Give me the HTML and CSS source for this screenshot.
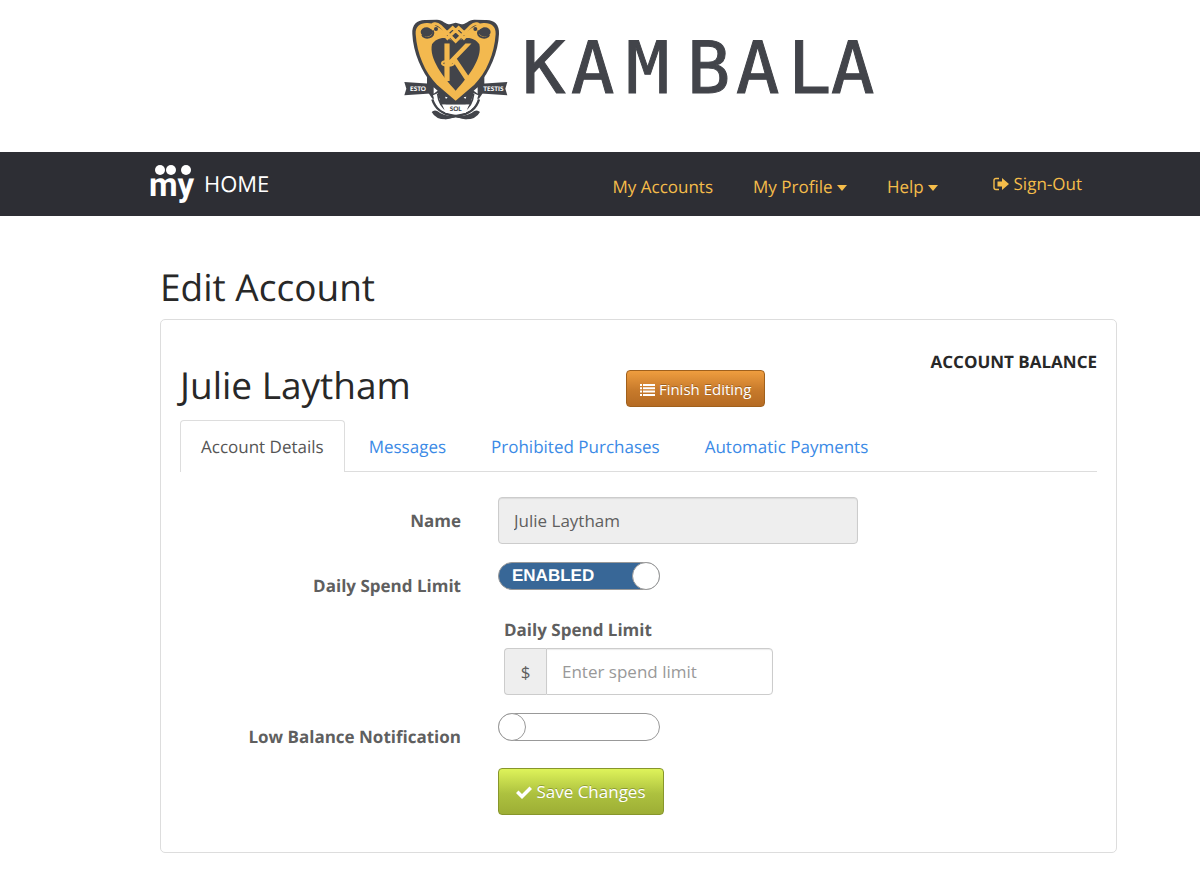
FILE: index.html
```
<!DOCTYPE html>
<html lang="en">
<head>
    <meta charset="UTF-8">
    <meta name="viewport" content="width=device-width, initial-scale=1.0">
    <title>Edit Account - Kambala</title>
    <link rel="stylesheet" href="styles.css">
</head>
<body>
    <header class="masthead">
        <svg class="logo" viewBox="0 0 486 120" role="img" aria-label="Kambala">
            <!-- crest -->
            <g transform="scale(0.3333)">
                <path d="M112 268 Q125 310 176 317 Q195 321 215 324 M252 268 Q240 310 188 317 Q170 321 150 324" fill="none" stroke="#42444a" stroke-width="7"/>
                <path d="M110 306 Q118 298 128 304 Q143 318 176 318 L188 318 Q222 318 237 304 Q247 298 255 306 Q243 329 210 328 L182 322 L155 328 Q122 329 110 306Z" fill="#42444a"/>
                <path d="M28 216 L118 222 L118 250 L28 256 L34 236Z M337 216 L247 222 L247 250 L337 256 L331 236Z" fill="#42444a"/>
                <path d="M96 180 L268 180 L268 242 L252 266 L112 266 L96 242Z" fill="#42444a"/>
                <path d="M135 250 H230 V284 H135Z" fill="#42444a"/>
                <path d="M116 232 L128 242 L116 251Z M248 232 L236 242 L248 251Z" fill="#fff"/>
                <path d="M114 256 L128 250 Q134 268 136 284 L152 284 L152 307 Q124 300 114 256Z M250 256 L236 250 Q230 268 228 284 L212 284 L212 307 Q240 300 250 256Z" fill="#fff"/>
                <path d="M128 252 Q132 288 158 304 M236 252 Q232 288 206 304" fill="none" stroke="#42444a" stroke-width="5"/>
                <path d="M142 284 H222 L212 309 H152Z" fill="#fff"/>
                <path d="M150 260 l8 2 -5 5z M214 260 l-8 2 5 5z" fill="#fff"/>
                <path d="M52 72 C50 42 68 28 94 30 L126 29 C144 30 151 43 165 43 L182 38 L199 43 C213 43 220 30 238 29 L270 30 C296 28 314 42 312 72 C310 126 284 188 250 224 L182 280 L114 224 C80 188 54 126 52 72Z" fill="#42444a"/>
                <path d="M62 72 C61 48 76 38 98 39 C114 39 122 49 134 54 C152 66 166 78 182 91 C198 78 212 66 230 54 C242 49 250 39 266 39 C288 38 303 48 302 72 C298 132 274 188 238 224 L182 272 L126 224 C90 188 66 132 62 72Z" fill="#f3b94f"/>
                <path d="M182 101 C161 76 125 80 111 103 C101 146 146 203 182 242 C218 203 263 146 253 103 C239 80 203 76 182 101Z" fill="#42444a"/>
                <ellipse cx="95" cy="66" rx="18" ry="14" fill="#42444a"/>
                <ellipse cx="269" cy="66" rx="18" ry="14" fill="#42444a"/>
                <path d="M82 74 C86 91 124 83 113 61 M282 74 C278 91 240 83 251 61" fill="none" stroke="#42444a" stroke-width="6"/>
                <path d="M149 48 H215 L210 74 L182 106 L154 74Z" fill="#42444a"/>
                <path d="M104 55 Q117 31 136 48 L182 94 L228 48 Q247 31 260 55 M121 68 Q145 82 162 63 L173 53 L210 88 M243 68 Q219 82 202 63 L191 53 L154 88" fill="none" stroke="#f3b94f" stroke-width="9"/>
                <circle cx="123" cy="57" r="6" fill="#42444a"/>
                <circle cx="241" cy="57" r="6" fill="#42444a"/>
                <text class="crest-k" x="185" y="212" text-anchor="middle">K</text>
                <ellipse cx="159" cy="160" rx="18" ry="7" fill="none" stroke="#f3b94f" stroke-width="6"/>
                <text class="motto" x="69" y="243" text-anchor="middle">ESTO</text>
                <text class="motto" x="295" y="243" text-anchor="middle">TESTIS</text>
                <text class="motto motto-dark" x="182" y="303" text-anchor="middle">SOL</text>
            </g>
            <text class="wordmark" y="83" x="127 176 231 292 341 393 436">KAMBALA</text>
        </svg>
    </header>

    <nav class="navbar">
        <a class="brand" href="#">
            <svg width="46" height="42" viewBox="0 0 46 42" aria-hidden="true">
                <circle cx="11" cy="7" r="5"/>
                <circle cx="22" cy="7" r="5"/>
                <circle cx="37" cy="7" r="5"/>
                <text class="brand-my" x="0" y="33">my</text>
            </svg>
            <span>HOME</span>
        </a>
        <div class="nav-links">
            <a href="#">My Accounts</a>
            <a href="#">My Profile <span class="caret"></span></a>
            <a href="#">Help <span class="caret"></span></a>
        </div>
        <a class="sign-out" href="#">
            <svg width="16" height="14" viewBox="0 0 16 14" aria-hidden="true">
                <path d="M6 1.5H3Q1 1.5 1 3.5V10.5Q1 12.5 3 12.5H6" fill="none" stroke="currentColor" stroke-width="1.4"/>
                <path d="M4.500 4.500H9V1L16 7L9 13V9.500H4.500Z" fill="currentColor"/>
            </svg>
            Sign-Out
        </a>
    </nav>

    <main class="content">
        <h1>Edit Account</h1>

        <section class="panel">
            <div class="panel-head">
                <h2>Julie Laytham</h2>
                <button type="button" class="btn btn-finish">
                    <svg width="15" height="12" viewBox="0 0 15 12" fill="currentColor" aria-hidden="true">
                        <path d="M0 0h2v2H0zM3 0h12v2H3zM0 3.300h2v2H0zM3 3.300h12v2H3zM0 6.600h2v2H0zM3 6.600h12v2H3zM0 10h2v2H0zM3 10h12v2H3z"/>
                    </svg>
                    Finish Editing
                </button>
                <strong class="balance">ACCOUNT BALANCE</strong>
            </div>

            <div class="tabs">
                <a class="active" href="#">Account Details</a>
                <a href="#">Messages</a>
                <a href="#">Prohibited Purchases</a>
                <a href="#">Automatic Payments</a>
            </div>

            <form class="account-form">
                <label class="row-label" for="name">Name</label>
                <input class="text-input" id="name" type="text" value="Julie Laytham" disabled>

                <label class="row-label" for="daily">Daily Spend Limit</label>
                <div>
                    <div class="switch">
                        <input id="daily" type="checkbox" checked>
                        <span class="switch-text">ENABLED</span>
                    </div>
                    <div class="limit">
                        <label for="limit">Daily Spend Limit</label>
                        <div class="input-group">
                            <span class="addon">$</span>
                            <input class="text-input" id="limit" type="text" placeholder="Enter spend limit">
                        </div>
                    </div>
                </div>

                <label class="row-label" for="low-balance">Low Balance Notification</label>
                <div class="switch">
                    <input id="low-balance" type="checkbox">
                </div>

                <button type="submit" class="btn btn-save">
                    <svg width="16" height="13" viewBox="0 0 16 13" aria-hidden="true">
                        <path d="M0 7L2.500 4.500L6 8L13.500 0.500L16 3L6 13Z" fill="currentColor"/>
                    </svg>
                    Save Changes
                </button>
            </form>
        </section>
    </main>
</body>
</html>
```
FILE: styles.css
```
*, *::before {
    box-sizing: border-box;
}
body {
    margin: 0;
    background: #fff;
    color: #282828;
    font-family: "Open Sans", sans-serif;
    font-size: 17px;
    line-height: 24px;
    text-rendering: geometricPrecision;
}
a {
    color: #3b8ae6;
    text-decoration: none;
}
h1, h2 {
    margin: 0;
    font-size: 37px;
    line-height: 44px;
    font-weight: normal;
}
.masthead {
    display: flex;
    justify-content: center;
    padding: 10px 84px 22px 160px;
}
.logo {
    display: block;
    width: 486px;
    height: 120px;
}
.wordmark {
    font-family: "DejaVu Sans Mono", monospace;
    font-size: 72px;
    fill: #42444a;
    stroke: #42444a;
}
.crest-k {
    font-family: "DejaVu Sans Mono", monospace;
    font-size: 155px;
    fill: #f3b94f;
}
.motto {
    font-family: Lato, sans-serif;
    font-weight: 900;
    font-size: 19px;
    fill: #fff;
}
.motto-dark {
    fill: #42444a;
}
.navbar {
    display: flex;
    align-items: center;
    height: 64px;
    padding: 0 118px 0 149px;
    background: #2d2e34;
}
.navbar a {
    color: #f5bd4a;
}
.navbar .brand {
    display: flex;
    align-items: center;
    gap: 9px;
    margin-right: auto;
    color: #fff;
    font-size: 22px;
}
.brand svg {
    fill: #fff;
    overflow: visible;
}
.brand-my {
    font-family: Roboto, sans-serif;
    font-size: 33px;
    font-weight: bold;
}
.nav-links {
    display: flex;
    gap: 40px;
    padding-top: 6px;
}
.caret {
    display: inline-block;
    border: 5px solid transparent;
    border-top: 6px solid;
    border-bottom: 0;
    vertical-align: 2px;
}
.sign-out {
    margin-left: 55px;
}
.sign-out svg {
    vertical-align: -1px;
}
.content {
    padding: 49px 83px 28px 160px;
}
.panel {
    margin-top: 10px;
    padding: 32px 19px 37px;
    border: 1px solid #ddd;
    border-radius: 5px;
}
.panel-head {
    display: grid;
    grid-template-columns: 446px auto 1fr;
    align-items: start;
}
.panel-head h2 {
    padding-top: 11px;
}
.balance {
    text-align: right;
    line-height: 20px;
}
.btn {
    border: 1px solid;
    border-radius: 4px;
    color: #fff;
    font-family: inherit;
    text-shadow: 0 -1px 0 rgba(0, 0, 0, 0.25);
    cursor: pointer;
}
.btn svg {
    vertical-align: -1px;
}
.btn-finish {
    height: 37px;
    margin-top: 18px;
    padding: 0 13px;
    border-color: #a0601c;
    background: linear-gradient(#ef9d3f, #c77a2b 55%, #b56b23);
    font-size: 15px;
}
.tabs {
    display: flex;
    gap: 3px;
    margin-top: 13px;
    border-bottom: 1px solid #ddd;
}
.tabs a {
    margin-bottom: -1px;
    padding: 14px 20px 13px;
    border: 1px solid transparent;
    border-bottom: 0;
    border-radius: 4px 4px 0 0;
}
.tabs .active {
    border-color: #ddd;
    background: #fff;
    color: #555;
}
.account-form {
    display: grid;
    grid-template-columns: 281px 1fr;
    gap: 18px 37px;
    margin-top: 25px;
    color: #5f5f5f;
}
.row-label {
    padding-top: 12px;
    text-align: right;
    font-weight: bold;
}
.text-input {
    width: 360px;
    height: 47px;
    padding: 0 15px;
    border: 1px solid #ccc;
    border-radius: 4px;
    background: #fff;
    box-shadow: inset 0 1px 1px rgba(0, 0, 0, 0.08);
    color: #5f5f5f;
    font-family: inherit;
    font-size: 17px;
}
.text-input:disabled {
    background: #eee;
}
.text-input::placeholder {
    color: #999;
}
.switch {
    position: relative;
    height: 28px;
}
.switch input {
    display: flex;
    appearance: none;
    width: 162px;
    height: 28px;
    margin: 0;
    border: 1px solid #999;
    border-radius: 14px;
    background: #fff;
}
.switch input::before {
    content: "";
    width: 28px;
    height: 28px;
    margin: -1px;
    border: 1px solid #999;
    border-radius: 50%;
    background: #fff;
}
.switch input:checked {
    justify-content: flex-end;
    background: #386797;
}
.switch-text {
    position: absolute;
    top: 2px;
    left: 14px;
    color: #fff;
    font-family: "Liberation Sans", Arial, sans-serif;
    font-weight: bold;
    pointer-events: none;
}
.limit {
    margin: 28px 0 0 6px;
}
.limit label {
    display: block;
    margin-bottom: 6px;
    font-weight: bold;
}
.input-group {
    display: flex;
}
.input-group .text-input {
    width: 227px;
    border-radius: 0 4px 4px 0;
}
.addon {
    width: 42px;
    height: 47px;
    border: 1px solid #ccc;
    border-right: 0;
    border-radius: 4px 0 0 4px;
    background: #eee;
    line-height: 47px;
    text-align: center;
}
.btn-save {
    grid-column: 2;
    justify-self: start;
    height: 47px;
    margin-top: 1px;
    padding: 0 17px;
    border-color: #87962b;
    background: linear-gradient(#def35a, #adc13f 55%, #9dae35);
    font-size: 17px;
}
```
